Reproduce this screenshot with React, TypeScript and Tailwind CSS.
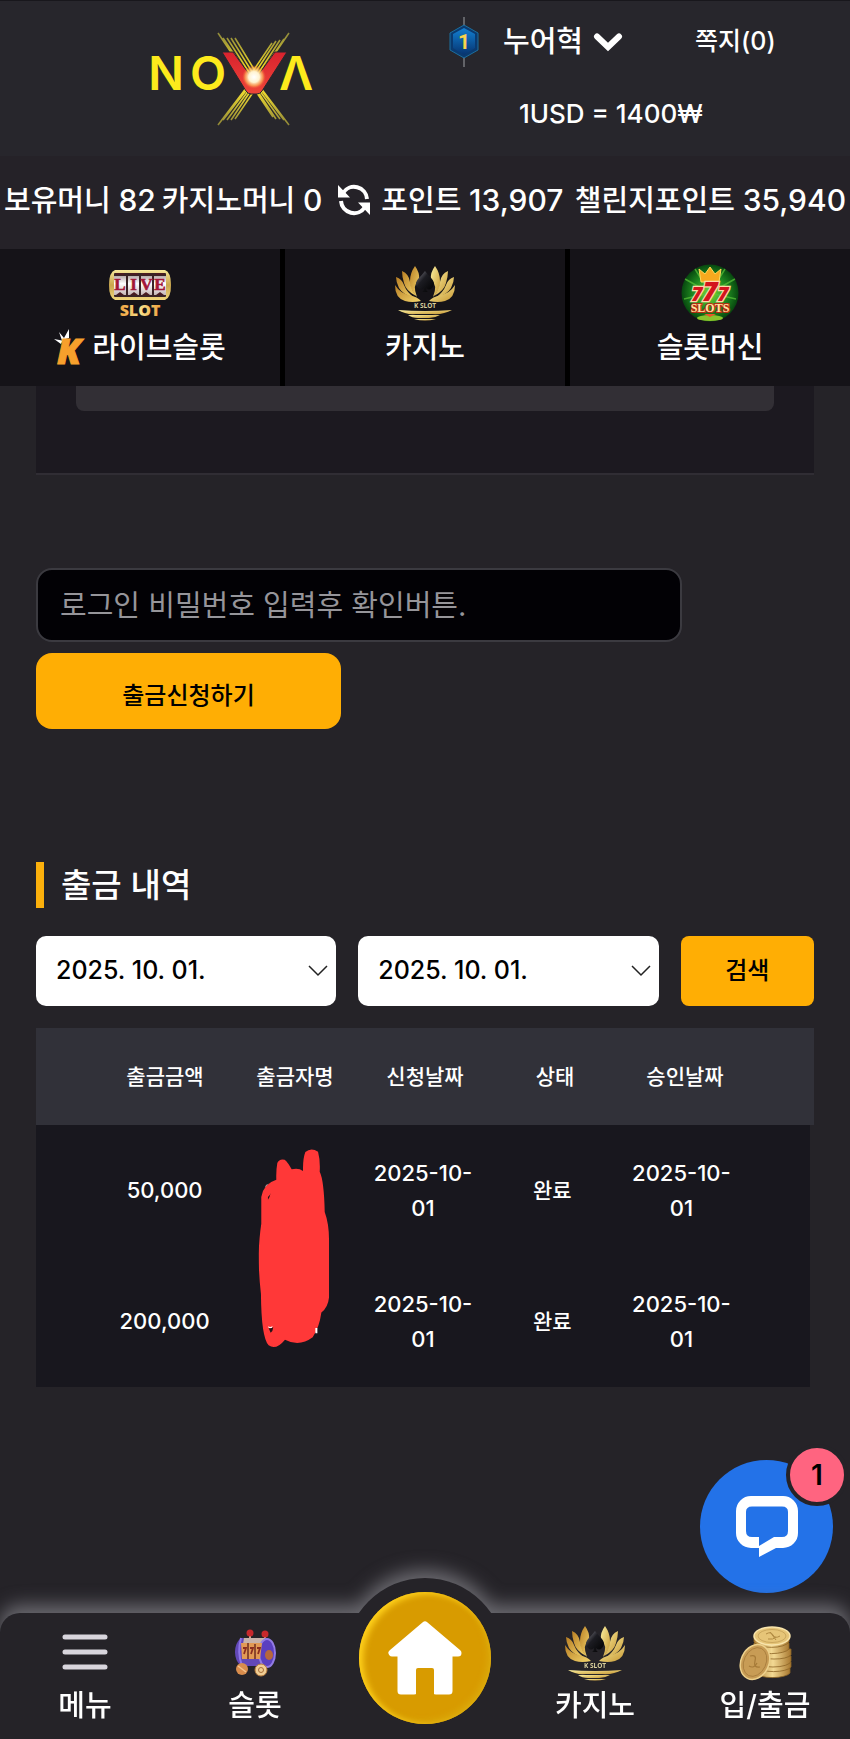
import React from 'react';

const withdrawals = [
    { amount: '50,000', requested: ['2025-10-', '01'], status: '완료', approved: ['2025-10-', '01'] },
    { amount: '200,000', requested: ['2025-10-', '01'], status: '완료', approved: ['2025-10-', '01'] },
];

const NovaLogo: React.FC = () => (
    <svg viewBox="0 0 172 94" className="w-[172px] h-[94px] overflow-visible" role="img" aria-label="NOVA">
        <defs>
            <radialGradient id="novaGlow">
                <stop offset="0" stopColor="#ffffff" />
                <stop offset="0.45" stopColor="#fff3d0" />
                <stop offset="0.75" stopColor="#ffb35a" stopOpacity="0.7" />
                <stop offset="1" stopColor="#f0503a" stopOpacity="0" />
            </radialGradient>
            <linearGradient id="novaRay" x1="0" y1="0" x2="0" y2="94" gradientUnits="userSpaceOnUse">
                <stop offset="0" stopColor="#8f8a3c" />
                <stop offset="0.4" stopColor="#f2dc24" />
                <stop offset="0.65" stopColor="#e8d430" />
                <stop offset="1" stopColor="#8a8238" />
            </linearGradient>
            <linearGradient id="novaV" x1="0" y1="20" x2="0" y2="60" gradientUnits="userSpaceOnUse">
                <stop offset="0" stopColor="#d9232e" />
                <stop offset="1" stopColor="#ee4438" />
            </linearGradient>
        </defs>
        <g fontFamily="Inter" fontWeight="600" fontSize="47" fill="#fdea1c" textAnchor="middle">
            <text x="19" y="57">N</text>
            <text x="61" y="57">O</text>
            <text x="149" y="57">Λ</text>
        </g>
        <g stroke="url(#novaRay)" strokeWidth="1.6">
            <path d="M71 0L108 55M76 5L110 55M80 5L112 55M84 5L112 50M88 5L113 46" />
            <path d="M142 0L104 55M137 6L106 52M133 7L105 50M129 8L104 46M125 10L102 44" />
            <path d="M71 92L103 50M76 87L105 50M80 87L107 50M84 87L109 50M88 86L111 52" />
            <path d="M142 92L110 50M137 87L109 50M133 86L107 50M129 86L105 50M126 84L106 54" />
        </g>
        <path d="M75 19h11l21 29 21-29h12l-25 39q-2 3-5 3h-6q-3 0-5-3z" fill="url(#novaV)" stroke="#27262c" strokeWidth="1" />
        <circle cx="107" cy="44" r="12" fill="url(#novaGlow)" />
    </svg>
);

const LevelBadge: React.FC = () => (
    <svg viewBox="0 0 30 50" className="w-[30px] h-[50px]" aria-hidden="true">
        <defs>
            <linearGradient id="badgeBlue" x1="0" y1="0" x2="0" y2="1">
                <stop offset="0" stopColor="#1380d2" />
                <stop offset="1" stopColor="#06336f" />
            </linearGradient>
        </defs>
        <path d="M15 0v50" stroke="#77787c" strokeWidth="1.5" />
        <path d="M15 8l14 8v17l-14 8-14-8V16z" fill="#0a3a70" stroke="#1c6f9f" strokeWidth="1" />
        <path d="M15 11l11 6v14l-11 7-11-7V17z" fill="url(#badgeBlue)" />
        <text x="15" y="32" textAnchor="middle" fontFamily="Roboto" fontWeight="700" fontSize="21" fill="#f9d34c">1</text>
    </svg>
);

const RefreshIcon: React.FC = () => (
    <svg viewBox="0 0 32 32" className="w-8 h-8" aria-hidden="true">
        <path d="M5 9A13 13 0 0 1 29 15M27 23A13 13 0 0 1 3 17" fill="none" stroke="#fff" strokeWidth="4" />
        <path d="M0 1v12.500h12zM32 31V18.500H20z" fill="#fff" />
    </svg>
);

const ChevronIcon: React.FC = () => (
    <svg viewBox="0 0 30 20" className="w-[30px] h-5" aria-hidden="true">
        <path d="M4 4.500l11 10.500 11-10.500" fill="none" stroke="#fff" strokeWidth="6" strokeLinecap="round" />
    </svg>
);

const LiveSlotIcon: React.FC = () => (
    <svg viewBox="0 0 64 48" className="w-16 h-12 overflow-visible" aria-hidden="true">
        <defs>
            <linearGradient id="reelGold" x1="0" y1="0" x2="0" y2="1">
                <stop offset="0" stopColor="#f7e89a" />
                <stop offset="0.5" stopColor="#c9a54c" />
                <stop offset="1" stopColor="#f0d67c" />
            </linearGradient>
            <linearGradient id="reelWhite" x1="0" y1="0" x2="0" y2="1">
                <stop offset="0" stopColor="#b9adad" />
                <stop offset="0.4" stopColor="#ffffff" />
                <stop offset="1" stopColor="#c4b6b6" />
            </linearGradient>
            <linearGradient id="slotText" x1="0" y1="0" x2="1" y2="0">
                <stop offset="0" stopColor="#f0a03c" />
                <stop offset="0.5" stopColor="#f6e08a" />
                <stop offset="1" stopColor="#f0a03c" />
            </linearGradient>
        </defs>
        <path d="M7 1h50q6 2 6 15t-6 15H7q-6-2-6-15T7 1z" fill="url(#reelGold)" />
        <rect x="6" y="4" width="52" height="24" rx="1" fill="#3a2326" />
        <path d="M6 7h12v19H6zM20 7h11v19H20zM33 7h11v19H33zM46 7h12v19H46z" fill="url(#reelWhite)" />
        <path d="M8 4h8v2H8zM22 4h8v2h-8zM34 4h8v2h-8zM48 4h8v2h-8zM8 26l4-3 4 3zM22 26l4-3 4 3zM34 26l4-3 4 3zM48 26l4-3 4 3z" fill="#4a1c22" />
        <g fontFamily="Liberation Serif" fontWeight="700" fontSize="17" fill="#a31638" stroke="#a31638" strokeWidth="0.6" textAnchor="middle">
            <text x="12" y="21">L</text>
            <text x="25.500" y="21">I</text>
            <text x="38.500" y="21">V</text>
            <text x="52" y="21">E</text>
        </g>
        <text x="32" y="47" textAnchor="middle" fontFamily="Open Sans" fontWeight="800" fontSize="16" fill="url(#slotText)">SLOT</text>
    </svg>
);

const KMark: React.FC = () => (
    <svg viewBox="0 0 34 36" className="w-[34px] h-9 overflow-visible" aria-hidden="true">
        <path d="M0 9l8 1.500L5 2l5 6 5-9v9q-6 1-8 6z" fill="#fff" />
        <text x="3" y="34" fontFamily="Open Sans" fontStyle="italic" fontWeight="800" fontSize="36" fill="#f7a02c" stroke="#f7a02c">K</text>
    </svg>
);

const LotusIcon: React.FC = () => (
    <svg viewBox="0 0 62 56" className="w-[62px] h-14" aria-hidden="true">
        <defs>
            <linearGradient id="lotusLeft" x1="0" y1="0" x2="1" y2="1">
                <stop offset="0" stopColor="#b97f24" />
                <stop offset="1" stopColor="#f3d56c" />
            </linearGradient>
            <linearGradient id="lotusRight" x1="0" y1="0" x2="1" y2="1">
                <stop offset="0" stopColor="#fbf0a0" />
                <stop offset="1" stopColor="#c69530" />
            </linearGradient>
            <linearGradient id="spade" x1="0" y1="0" x2="1" y2="1">
                <stop offset="0" stopColor="#8b8a93" />
                <stop offset="0.4" stopColor="#1c1c22" />
                <stop offset="1" stopColor="#000" />
            </linearGradient>
        </defs>
        <g fill="url(#lotusLeft)">
            <path d="M21 1q5 7 4 13-7 6-2 18-8-8-7-16 0-8 5-15z" />
            <path d="M8 6q7 3 8 11 1 8 6 14-10-5-12-13-2-7-2-12z" />
            <path d="M2 12q6 2 8 8 3 8 11 13-12-3-16-10-3-6-3-11z" />
            <path d="M1 20q5 8 14 10 9 2 12 6-9 2-16 0Q1 33 1 20z" />
        </g>
        <g fill="url(#lotusRight)">
            <path d="M41 1q-5 7-4 13 7 6 2 18 8-8 7-16 0-8-5-15z" />
            <path d="M54 6q-7 3-8 11-1 8-6 14 10-5 12-13 2-7 2-12z" />
            <path d="M60 12q-6 2-8 8-3 8-11 13 12-3 16-10 3-6 3-11z" />
            <path d="M61 20q-5 8-14 10-9 2-12 6 9 2 16 0 10-3 10-16z" />
        </g>
        <path d="M31 6q3 4 7 8 4 5 0 9-3 3-6 0 0 3 2 4h-6q2-1 2-4-3 3-6 0-4-4 0-9 4-4 7-8z" fill="url(#spade)" />
        <text x="31" y="43" textAnchor="middle" fontFamily="Open Sans" fontWeight="700" fontSize="6.500" fill="#d9cf9c">K SLOT</text>
        <g fill="url(#lotusRight)">
            <path d="M4 45q27 2 54 0-9 5-20 4H22q-10 1-18-4z" />
            <path d="M14 50h32q-5 3-11 3H24q-6 0-10-3z" />
            <path d="M20 54h22q-11 3-22 0z" />
        </g>
    </svg>
);

const SlotsIcon: React.FC = () => (
    <svg viewBox="0 0 58 58" className="w-[58px] h-[58px]" aria-hidden="true">
        <defs>
            <radialGradient id="slotsGreen">
                <stop offset="0" stopColor="#7ddc35" />
                <stop offset="0.6" stopColor="#1f8a20" />
                <stop offset="1" stopColor="#07480f" />
            </radialGradient>
        </defs>
        <circle cx="29" cy="29" r="28.500" fill="url(#slotsGreen)" />
        <path d="M29 29L4 15M29 29L14 5M29 29L44 5M29 29L54 15M29 29L3 35M29 29L55 35" stroke="#5cc63a" strokeWidth="1.500" opacity="0.7" />
        <ellipse cx="29" cy="54" rx="13" ry="3" fill="#8ac32c" />
        <path d="M20 18L18 5l6 5 5-7 5 7 6-5-2 13z" fill="#f8a91e" stroke="#ffd95c" strokeWidth="1" />
        <text
            x="29"
            y="37"
            textAnchor="middle"
            fontFamily="Open Sans"
            fontWeight="800"
            fontStyle="italic"
            fill="#d3151d"
            stroke="#ffd9a8"
            strokeWidth="2.500"
            paintOrder="stroke"
        >
            <tspan fontSize="19">7</tspan>
            <tspan fontSize="26">7</tspan>
            <tspan fontSize="19">7</tspan>
        </text>
        <text x="29" y="48" textAnchor="middle" fontFamily="Liberation Serif" fontWeight="700" fontSize="12" fill="#ffe6a0" stroke="#b92a14" strokeWidth="2" paintOrder="stroke">SLOTS</text>
        <path d="M23 50h12l-6 3z" fill="#e9552a" />
    </svg>
);

const MenuIcon: React.FC = () => (
    <svg viewBox="0 0 46 38" className="w-[46px] h-[38px]" aria-hidden="true">
        <path d="M3 3h40M3 18h40M3 33h40" stroke="#d8d5dc" strokeWidth="5" strokeLinecap="round" />
    </svg>
);

const SlotMachineIcon: React.FC = () => (
    <svg viewBox="0 0 42 48" className="w-[42px] h-12" aria-hidden="true">
        <path d="M16 5v10M31 6v10" stroke="#d9a08a" strokeWidth="2" />
        <circle cx="16" cy="4" r="3.500" fill="#c7282c" />
        <circle cx="31" cy="5" r="3.500" fill="#c7282c" />
        <path d="M7 9h26v28H7q-6-5-6-14T7 9z" fill="#6248b8" />
        <path d="M10 9h21v6H9z" fill="#c7b3ab" />
        <path d="M7 9q-4 14 1 28" stroke="#8d76e8" strokeWidth="2" fill="none" />
        <ellipse cx="33" cy="24" rx="8" ry="14" fill="#5a3fc0" stroke="#927be4" strokeWidth="2" />
        <ellipse cx="35" cy="26" rx="4" ry="5" fill="#b7673c" />
        <path d="M7 14h21l-2 16H8z" fill="#e29a55" />
        <path d="M14 14v16M21 15v15" stroke="#6f2d22" strokeWidth="1.500" />
        <path d="M9 19h3l-2 6M16 19h3l-2 6M23 19h3l-2 6" stroke="#8c2e20" strokeWidth="1.800" fill="none" />
        <circle cx="8" cy="40" r="6" fill="#d98c4c" />
        <path d="M4 37l8 6" stroke="#f4c38b" strokeWidth="1.500" />
        <circle cx="27" cy="41" r="6" fill="#f0cd94" stroke="#b77b3e" strokeWidth="1" />
        <circle cx="27" cy="41" r="2.500" fill="none" stroke="#a86d38" strokeWidth="1" />
    </svg>
);

const CoinsIcon: React.FC = () => (
    <svg viewBox="0 0 54 56" className="w-[54px] h-14" aria-hidden="true">
        <defs>
            <linearGradient id="coinEdge" x1="0" y1="0" x2="1" y2="0">
                <stop offset="0" stopColor="#b08338" />
                <stop offset="0.5" stopColor="#f3d993" />
                <stop offset="1" stopColor="#a87830" />
            </linearGradient>
        </defs>
        <g fill="url(#coinEdge)" stroke="#8d6426" strokeWidth="0.8">
            <path d="M17 43v5a18 6 0 0 0 35 0v-5z" />
            <path d="M18 37v5a18 6 0 0 0 35 0v-5z" />
            <path d="M17 31v5a18 6 0 0 0 36 0v-5z" />
            <path d="M19 24v6a18 6 0 0 0 34 0v-6z" />
            <path d="M16 18v6a18 6 0 0 0 35 0v-6z" />
            <path d="M16 11v6a18 7 0 0 0 35 0v-6z" />
        </g>
        <ellipse cx="34" cy="11" rx="18" ry="9" fill="#e6c578" stroke="#f8e4ab" strokeWidth="1.500" />
        <ellipse cx="34" cy="11" rx="14" ry="6.500" fill="none" stroke="#c39e56" strokeWidth="0.8" />
        <path d="M28 9q5-3 7 1t7 1M30 14q5 1 8-2M32 7l6 8" stroke="#b18a42" strokeWidth="1" fill="none" />
        <ellipse cx="17" cy="37" rx="14" ry="18" transform="rotate(25 17 37)" fill="#c89c55" stroke="#ecd08c" strokeWidth="1.500" />
        <ellipse cx="17" cy="37" rx="11" ry="15" transform="rotate(25 17 37)" fill="none" stroke="#a67c3c" strokeWidth="0.8" />
        <path d="M12 31q7-2 5 5t5 6M11 41q5 3 8-3" stroke="#a67a38" strokeWidth="1.200" fill="none" />
    </svg>
);

const HomeIcon: React.FC = () => (
    <svg viewBox="0 0 76 76" className="w-[76px] h-[76px]" aria-hidden="true">
        <path d="M38 5L5 33H14V71H27V46H49V71H62V33H71Z" fill="#fff" stroke="#fff" strokeWidth="7" strokeLinejoin="round" />
        <path d="M29 76V50q0-2 2-2h14q2 0 2 2v26z" fill="#d89b00" />
    </svg>
);

const ChatIcon: React.FC = () => (
    <svg viewBox="0 0 62 62" className="w-[62px] h-[62px]" aria-hidden="true">
        <path
            fillRule="evenodd"
            fill="#fff"
            d="M15 0H47a15 15 0 0 1 15 15V37a15 15 0 0 1-15 15H40L23 61V52H15A15 15 0 0 1 0 37V15A15 15 0 0 1 15 0ZM16 10.500Q10 10.500 10 16V35Q10 41 16 41H23V50L38 41H46Q52 41 52 35V16Q52 10.500 46 10.500Z"
        />
    </svg>
);

// Marker stroke that hides the account holder's name
const Redaction: React.FC = () => (
    <svg viewBox="18 26 212 596" className="absolute top-6 left-1/2 -translate-x-1/2 w-[71px] h-[199px] z-10" aria-hidden="true">
        <path
            d="M71 118Q70 90 74 68Q80 54 96 58Q106 66 117 87Q138 82 151 92Q150 55 158 35Q175 20 196 34Q203 60 201 94Q214 120 216 215Q229 250 229 300V470Q226 500 206 516Q200 560 180 590Q140 620 97 597Q70 630 48 614Q26 590 25 460Q18 400 18 340Q20 290 26 250V170Q32 130 71 118Z"
            fill="#ff3838"
        />
        <path d="M36 142q3-10 13-13-7 4-13 13zM46 557q8 5 14-2l-2 6q-6 3-10 0zM188 562h6v16h-6z" fill="#fff" />
        <path d="M48 562q8 2 14-2-1 12-8 16zM46 170q6-4 8-12-2 12-8 20z" fill="#241316" />
    </svg>
);

const categories = [
    { label: '라이브슬롯', icon: <LiveSlotIcon />, mark: <KMark /> },
    { label: '카지노', icon: <LotusIcon /> },
    { label: '슬롯머신', icon: <SlotsIcon /> },
];

const Balance: React.FC<{ label: string; value: string }> = ({ label, value }) => (
    <span>
        {label} <span className="text-[30px]">{value}</span>
    </span>
);

const DateCell: React.FC<{ parts: string[] }> = ({ parts }) => (
    <td className="flex-1 min-w-0 px-3 text-[22px] leading-[35px]">
        {parts[0]}
        <wbr />
        {parts[1]}
    </td>
);

const DateSelect: React.FC<{ label: string }> = ({ label }) => (
    <div className="relative">
        <select
            aria-label={label}
            className="w-full h-[70px] pl-5 pr-10 rounded-[10px] bg-white text-black text-[25px] appearance-none"
        >
            <option>2025. 10. 01.</option>
        </select>
        <svg viewBox="0 0 20 12" className="absolute right-2 top-1/2 -translate-y-1/2 w-5 h-3 pointer-events-none" aria-hidden="true">
            <path d="M1 1l9 9 9-9" fill="none" stroke="#222" strokeWidth="1.500" />
        </svg>
    </div>
);

const NavItem: React.FC<{ label: string; children: React.ReactNode }> = ({ label, children }) => (
    <a href="#" className="flex flex-col items-center pt-3 pb-2">
        <span className="h-14 flex items-center">{children}</span>
        <span className="text-[29px] leading-[50px]">{label}</span>
    </a>
);

const App: React.FC = () => {
    return (
        <div className="relative min-h-screen flex flex-col bg-[#252328] text-white font-medium font-['Inter','Noto_Sans_CJK_KR',sans-serif]">
            <header>
                <div className="grid grid-cols-2 h-[156px] border-t border-[#18171c] bg-[#27262c]">
                    <div className="flex justify-center pl-10 pt-8">
                        <NovaLogo />
                    </div>
                    <div className="pt-[13px] pl-6">
                        <div className="flex items-center h-14">
                            <LevelBadge />
                            <button type="button" className="flex items-center gap-[10px] ml-6 text-[29px]">
                                누어혁
                                <ChevronIcon />
                            </button>
                            <a href="#" className="ml-[72px] text-[25px]">쪽지(0)</a>
                        </div>
                        <div className="mt-7 pl-[70px] text-[26px] leading-8">1USD = 1400₩</div>
                    </div>
                </div>
                <div className="flex items-center justify-between h-[93px] px-1 pb-[5px] bg-[#252228] text-[29px] whitespace-nowrap">
                    <div className="flex gap-[6px]">
                        <Balance label="보유머니" value="82" />
                        <Balance label="카지노머니" value="0" />
                    </div>
                    <button type="button" aria-label="새로고침" className="pl-1">
                        <RefreshIcon />
                    </button>
                    <Balance label="포인트" value="13,907" />
                    <Balance label="챌린지포인트" value="35,940" />
                </div>
                <nav className="grid grid-cols-3 gap-[5px] bg-black">
                    {categories.map((item) => (
                        <a key={item.label} href="#" className="flex flex-col items-center h-[137px] pt-[15px] bg-[#151318]">
                            <span className="h-[58px] flex items-center">{item.icon}</span>
                            <span className="flex items-center gap-1 text-[29px] leading-[52px]">
                                {item.mark}
                                {item.label}
                            </span>
                        </a>
                    ))}
                </nav>
            </header>

            <main className="flex-1 px-9">
                <div className="h-[89px] px-10 bg-[#1c1920] border-b-2 border-[#302d34]">
                    <div className="h-[25px] rounded-b-lg bg-[#322f35]"></div>
                </div>

                <form className="mt-[93px] flex flex-col items-start gap-[11px]">
                    <input
                        type="password"
                        aria-label="로그인 비밀번호"
                        placeholder="로그인 비밀번호 입력후 확인버튼."
                        className="w-[83%] h-[74px] px-[22px] rounded-2xl border-2 border-[#3b3a40] bg-[#020105] text-[29px] font-normal placeholder:text-[#96959a]"
                    />
                    <button type="button" className="w-[305px] h-[76px] pt-[10px] rounded-2xl bg-[#ffae04] text-black text-[24px]">
                        출금신청하기
                    </button>
                </form>

                <section className="mt-[133px]">
                    <h2 className="pl-[17px] border-l-8 border-[#fbb00c] text-[33px] leading-[46px]">출금 내역</h2>
                    <div className="grid grid-cols-[9fr_9fr_4fr] gap-[22px] mt-7">
                        <DateSelect label="시작일" />
                        <DateSelect label="종료일" />
                        <button type="button" className="h-[70px] rounded-lg bg-[#ffae04] text-black text-[24px]">검색</button>
                    </div>
                    <table className="block mt-[22px] text-[21px] text-center">
                        <thead className="block bg-[#313139]">
                            <tr className="flex items-center h-[97px] px-16">
                                <th className="flex-1 font-medium">출금금액</th>
                                <th className="flex-1 font-medium">출금자명</th>
                                <th className="flex-1 font-medium">신청날짜</th>
                                <th className="flex-1 font-medium">상태</th>
                                <th className="flex-1 font-medium">승인날짜</th>
                            </tr>
                        </thead>
                        <tbody className="block mr-1 bg-[#18171e]">
                            {withdrawals.map((row, i) => (
                                <tr key={row.amount} className="flex items-center h-[131px] px-16">
                                    <td className="flex-1 min-w-0 px-3 text-[22px]">{row.amount}</td>
                                    <td className="flex-1 min-w-0 px-3 relative self-stretch">{i === 0 && <Redaction />}</td>
                                    <DateCell parts={row.requested} />
                                    <td className="flex-1 min-w-0 px-3">{row.status}</td>
                                    <DateCell parts={row.approved} />
                                </tr>
                            ))}
                        </tbody>
                    </table>
                </section>
            </main>

            <button type="button" aria-label="채팅" className="fixed right-[17px] bottom-[146px] w-[133px] h-[133px] rounded-full bg-[#2372e8] flex items-center justify-center">
                <ChatIcon />
                <span className="absolute -top-4 -right-[15px] w-[62px] h-[62px] rounded-full border-4 border-[#252328] bg-[#ff6480] text-black text-[28px] font-semibold flex items-center justify-center">
                    1
                </span>
            </button>

            <footer className="sticky bottom-0 drop-shadow-[0_-8px_9px_#6b6a70]">
                <div className="absolute left-1/2 -translate-x-1/2 -top-[35px] w-40 h-40 rounded-full bg-[#252328]"></div>
                <nav className="relative grid grid-cols-5 rounded-t-[20px] bg-[#252328]">
                    <NavItem label="메뉴"><MenuIcon /></NavItem>
                    <NavItem label="슬롯"><SlotMachineIcon /></NavItem>
                    <a href="#" aria-label="홈" className="relative">
                        <span className="absolute left-1/2 -translate-x-1/2 -top-[21px] w-[132px] h-[132px] rounded-full bg-[#d89b00] shadow-[inset_4px_2px_6px_#ffd21c,inset_-3px_-3px_6px_#dba90c] flex items-center justify-center">
                            <HomeIcon />
                        </span>
                    </a>
                    <NavItem label="카지노"><LotusIcon /></NavItem>
                    <NavItem label="입/출금"><CoinsIcon /></NavItem>
                </nav>
            </footer>
        </div>
    );
};

export default App;
